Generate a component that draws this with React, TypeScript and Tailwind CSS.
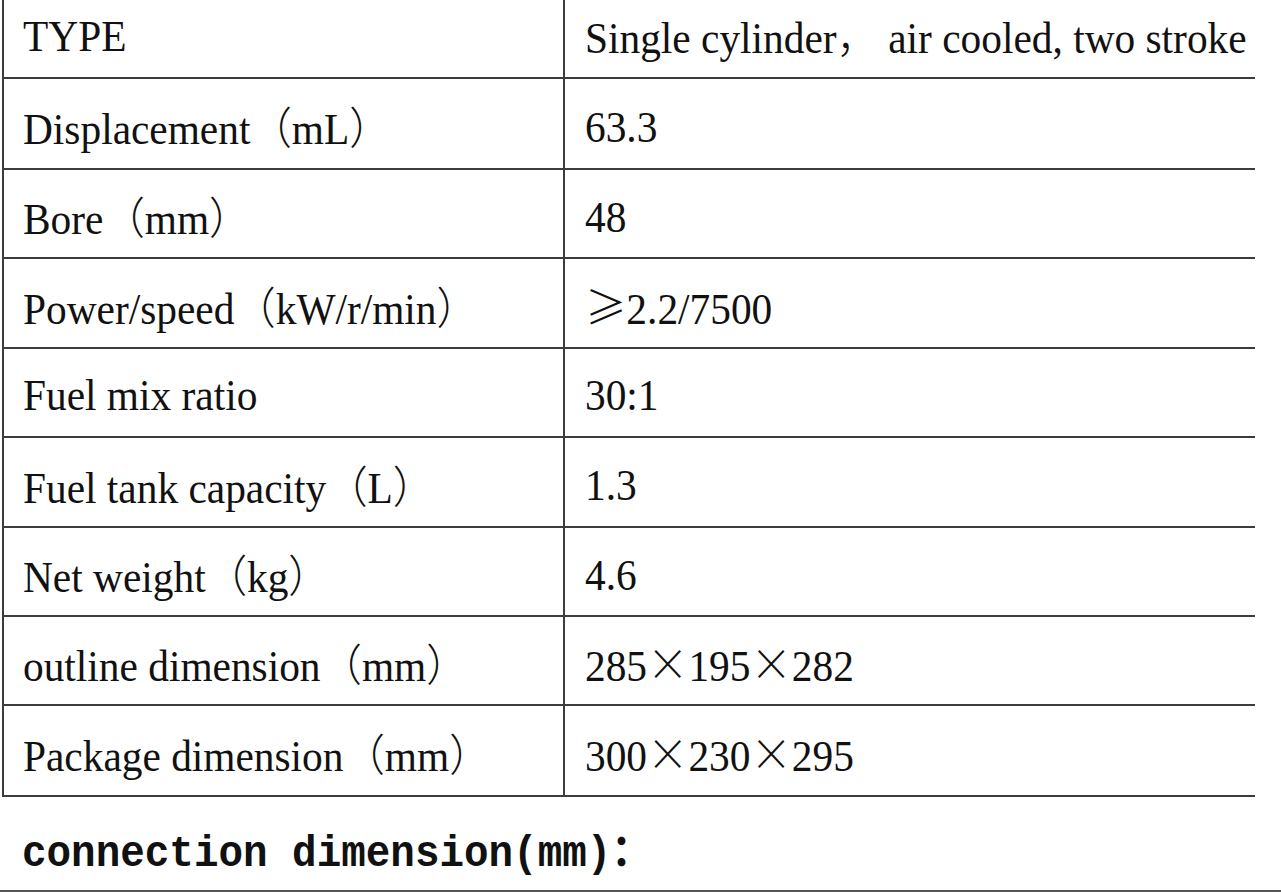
import React from "react";

const serif = "font-['Liberation_Serif','Noto_Sans_CJK_SC',serif]";

type Row = { h: string; pad: string; label: React.ReactNode; value: React.ReactNode };

const cjk = (s: string) => (
  <span className="font-['Noto_Sans_CJK_SC',sans-serif] font-light">{s}</span>
);

const rows: Row[] = [
  { h: "h-[79px]", pad: "pb-[4px]", label: "TYPE", value: <>Single cylinder{cjk("，")} air cooled, two stroke</> },
  { h: "h-[91px]", pad: "pt-[8px]", label: <>Displacement{cjk("（")}mL{cjk("）")}</>, value: "63.3" },
  { h: "h-[89px]", pad: "pt-[8px]", label: <>Bore{cjk("（")}mm{cjk("）")}</>, value: "48" },
  { h: "h-[90px]", pad: "pt-[8px]", label: <>Power/speed{cjk("（")}kW/r/min{cjk("）")}</>, value: <>{cjk("≥")}2.2/7500</> },
  { h: "h-[89px]", pad: "pt-[6px]", label: "Fuel mix ratio", value: "30:1" },
  { h: "h-[90px]", pad: "pt-[8px]", label: <>Fuel tank capacity{cjk("（")}L{cjk("）")}</>, value: "1.3" },
  { h: "h-[89px]", pad: "pt-[8px]", label: <>Net weight{cjk("（")}kg{cjk("）")}</>, value: "4.6" },
  { h: "h-[89px]", pad: "pt-[8px]", label: <>outline dimension{cjk("（")}mm{cjk("）")}</>, value: <>285{cjk("×")}195{cjk("×")}282</> },
  { h: "h-[91px]", pad: "pt-[8px]", label: <>Package dimension{cjk("（")}mm{cjk("）")}</>, value: <>300{cjk("×")}230{cjk("×")}295</> },
];

export default function App() {
  return (
    <div className="w-[1281px] h-[892px] bg-white overflow-hidden flex flex-col text-[#111]">
      <div className={`ml-[2px] w-[1253px] border-l-2 border-[#3c3c3c] flex flex-col ${serif} text-[44px] leading-none`}>
        {rows.map((r, i) => (
          <div key={i} className={`${r.h} flex border-b-2 border-[#3c3c3c]`}>
            <div className={`w-[561px] shrink-0 border-r-2 border-[#3c3c3c] flex items-center pl-[19px] ${r.pad} whitespace-nowrap`}>
              <span className="inline-block origin-left scale-x-[0.94]">{r.label}</span>
            </div>
            <div className={`flex-1 min-w-0 flex items-center pl-[20px] ${r.pad} whitespace-nowrap`}>
              <span className="inline-block origin-left scale-x-[0.94]">{r.value}</span>
            </div>
          </div>
        ))}
      </div>
      <div className="flex-1 flex items-center pl-[22px] pt-[14px] border-b-2 border-[#555] font-['Liberation_Mono','Noto_Sans_CJK_SC',monospace] font-bold text-[44px] leading-none whitespace-nowrap">
        <span className="inline-block origin-left scale-x-[0.93]">
          connection dimension(mm)<span className="font-['Noto_Sans_CJK_SC',sans-serif]">：</span>
        </span>
      </div>
    </div>
  );
}
